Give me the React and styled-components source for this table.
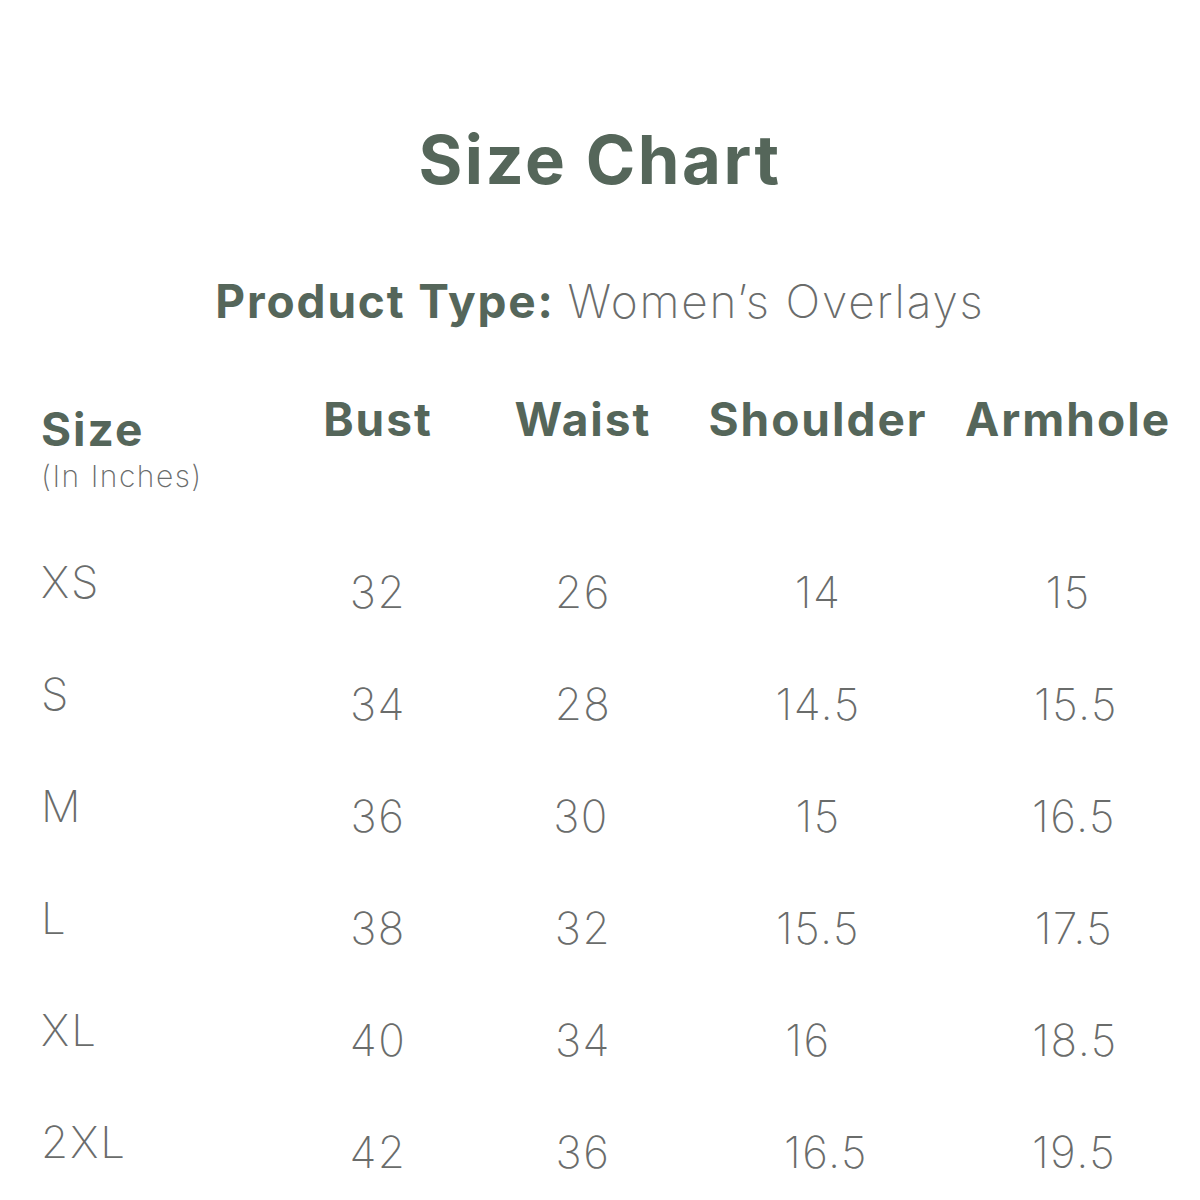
import React from 'react'
import styled, { createGlobalStyle } from 'styled-components'

const GREEN = '#55665a'
const GREY = '#6a6c6b'

const GlobalStyle = createGlobalStyle`
  body {
    margin: 0;
    background: #fff;
    font-family: Inter, "Open Sans", sans-serif;
  }
`

const Page = styled.div`
  width: 1200px;
  height: 1200px;
  overflow: hidden;
  display: flex;
  flex-direction: column;
  align-items: center;
  padding-top: 112px;
  box-sizing: border-box;
`

const Title = styled.h1`
  margin: 0;
  font-size: 67px;
  line-height: 96px;
  font-weight: 700;
  color: ${ GREEN };
  letter-spacing: 2.5px;
`

const Subtitle = styled.h2`
  margin: 65px 0 0;
  font-size: 46px;
  line-height: 56px;
  font-weight: 700;
  color: ${ GREEN };
  letter-spacing: 1.85px;

  & > span {
    font-weight: 200;
    color: ${ GREY };
  }
`

const Table = styled.div`
  align-self: stretch;
  display: grid;
  grid-template-columns: 237px 200px 210px 260px 240px;
  padding-left: 41px;
  margin-top: 62px;
`

const HeadCell = styled.div`
  font-size: 46px;
  line-height: 56px;
  font-weight: 700;
  color: ${ GREEN };
  text-align: ${ props => (props.left ? 'left' : 'center') };
  letter-spacing: 2px;
  white-space: nowrap;
  margin-top: ${ props => (props.left ? '10px' : '0') };
  height: 133px;
`

const Note = styled.div`
  font-size: 30px;
  line-height: 38px;
  font-weight: 200;
  letter-spacing: 1.5px;
  color: ${ GREY };
`

const Cell = styled.div`
  font-size: 44px;
  line-height: 112px;
  height: 112px;
  font-weight: 200;
  color: ${ GREY };
  letter-spacing: ${ props => (props.left ? 2 : 1.5) }px;
  text-align: ${ props => (props.left ? 'left' : 'center') };
  transform: translate(${ props => props.dx || 0 }px, ${ props => (props.left ? -8 : 2) }px);
`

// [label, bust, waist, shoulder, armhole]
const rows = [
  ['XS', '32', '26', '14', '15'],
  ['S', '34', '28', '14.5', '15.5'],
  ['M', '36', '30', '15', '16.5'],
  ['L', '38', '32', '15.5', '17.5'],
  ['XL', '40', '34', '16', '18.5'],
  ['2XL', '42', '36', '16.5', '19.5'],
]

const nudges = {
  'XS': [0, 0, 0, 0, 0],
  'S': [0, 0, 0, 0, 8],
  'M': [0, 0, -2, 0, 6],
  'L': [0, 0, 0, 0, 6],
  'XL': [0, 0, 0, -10, 7],
  '2XL': [0, 0, 0, 8, 6],
}

const App = () => (
  <Page>
    <GlobalStyle />
    <Title>Size Chart</Title>
    <Subtitle>
      Product Type: <span>Women’s Overlays</span>
    </Subtitle>
    <Table>
      <HeadCell left>
        Size
        <Note>(In Inches)</Note>
      </HeadCell>
      <HeadCell>Bust</HeadCell>
      <HeadCell>Waist</HeadCell>
      <HeadCell>Shoulder</HeadCell>
      <HeadCell>Armhole</HeadCell>
      {rows.map(row =>
        row.map((value, i) => (
          <Cell key={row[0] + i} left={i === 0} dx={nudges[row[0]][i]}>
            {value}
          </Cell>
        ))
      )}
    </Table>
  </Page>
)

export default App
